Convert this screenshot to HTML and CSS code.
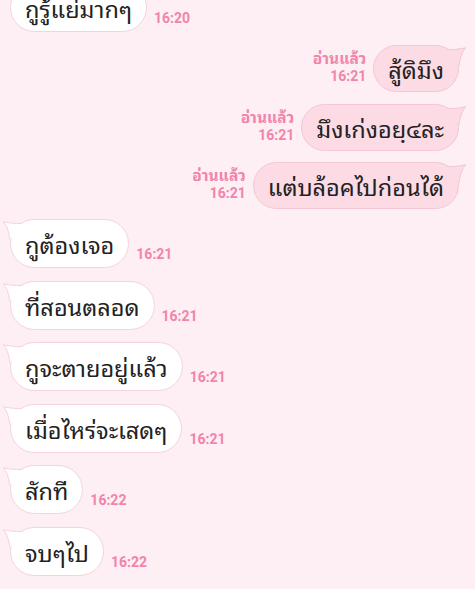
FILE: index.html
```html
<!DOCTYPE html>
<html lang="th">
<head>
<meta charset="utf-8">
<link rel="stylesheet" href="styles.css">
</head>
<body>
<div class="chat">
  <div class="row left first">
    <div class="bubble in">กูรู้แย่มากๆ</div>
    <div class="time">16:20</div>
  </div>

  <div class="row right r1">
    <div class="meta"><span class="read">อ่านแล้ว</span><span class="time">16:21</span></div>
    <div class="bubble out">สู้ดิมึง<svg class="tail-r" viewBox="0 0 20 22" width="20" height="22"><path d="M0 2.5 C6 3 12 2 18.5 0.8 C16 4 13.5 8 12 19" class="tf"/><path d="M0 2.5 C6 3 12 2 18.5 0.8 C16 4 13.5 8 12 19" class="ts"/></svg></div>
  </div>

  <div class="row right r2">
    <div class="meta"><span class="read">อ่านแล้ว</span><span class="time">16:21</span></div>
    <div class="bubble out">มึงเก่งอยฺ๔ละ<svg class="tail-r" viewBox="0 0 20 22" width="20" height="22"><path d="M0 2.5 C6 3 12 2 18.5 0.8 C16 4 13.5 8 12 19" class="tf"/><path d="M0 2.5 C6 3 12 2 18.5 0.8 C16 4 13.5 8 12 19" class="ts"/></svg></div>
  </div>

  <div class="row right r3">
    <div class="meta"><span class="read">อ่านแล้ว</span><span class="time">16:21</span></div>
    <div class="bubble out">แต่บล้อคไปก่อนได้<svg class="tail-r" viewBox="0 0 20 22" width="20" height="22"><path d="M0 2.5 C6 3 12 2 18.5 0.8 C16 4 13.5 8 12 19" class="tf"/><path d="M0 2.5 C6 3 12 2 18.5 0.8 C16 4 13.5 8 12 19" class="ts"/></svg></div>
  </div>

  <div class="row left l1">
    <div class="bubble in">กูต้องเจอ<svg class="tail-l" viewBox="0 0 20 22" width="20" height="22"><path d="M20 2.5 C14 3 8 2 1.5 0.8 C4 4 6.5 8 8 19" class="tf"/><path d="M20 2.5 C14 3 8 2 1.5 0.8 C4 4 6.5 8 8 19" class="ts"/></svg></div>
    <div class="time">16:21</div>
  </div>

  <div class="row left">
    <div class="bubble in">ที่สอนตลอด<svg class="tail-l" viewBox="0 0 20 22" width="20" height="22"><path d="M20 2.5 C14 3 8 2 1.5 0.8 C4 4 6.5 8 8 19" class="tf"/><path d="M20 2.5 C14 3 8 2 1.5 0.8 C4 4 6.5 8 8 19" class="ts"/></svg></div>
    <div class="time">16:21</div>
  </div>

  <div class="row left">
    <div class="bubble in">กูจะตายอยู่แล้ว<svg class="tail-l" viewBox="0 0 20 22" width="20" height="22"><path d="M20 2.5 C14 3 8 2 1.5 0.8 C4 4 6.5 8 8 19" class="tf"/><path d="M20 2.5 C14 3 8 2 1.5 0.8 C4 4 6.5 8 8 19" class="ts"/></svg></div>
    <div class="time">16:21</div>
  </div>

  <div class="row left">
    <div class="bubble in">เมื่อไหร่จะเสดๆ<svg class="tail-l" viewBox="0 0 20 22" width="20" height="22"><path d="M20 2.5 C14 3 8 2 1.5 0.8 C4 4 6.5 8 8 19" class="tf"/><path d="M20 2.5 C14 3 8 2 1.5 0.8 C4 4 6.5 8 8 19" class="ts"/></svg></div>
    <div class="time">16:21</div>
  </div>

  <div class="row left">
    <div class="bubble in">สักที<svg class="tail-l" viewBox="0 0 20 22" width="20" height="22"><path d="M20 2.5 C14 3 8 2 1.5 0.8 C4 4 6.5 8 8 19" class="tf"/><path d="M20 2.5 C14 3 8 2 1.5 0.8 C4 4 6.5 8 8 19" class="ts"/></svg></div>
    <div class="time">16:22</div>
  </div>

  <div class="row left">
    <div class="bubble in">จบๆไป<svg class="tail-l" viewBox="0 0 20 22" width="20" height="22"><path d="M20 2.5 C14 3 8 2 1.5 0.8 C4 4 6.5 8 8 19" class="tf"/><path d="M20 2.5 C14 3 8 2 1.5 0.8 C4 4 6.5 8 8 19" class="ts"/></svg></div>
    <div class="time">16:22</div>
  </div>
</div>
</body>
</html>
```
FILE: styles.css
```css
html, body {
  margin: 0;
  padding: 0;
  background: #fdeff4;
  height: 100%;
  overflow: hidden;
}
.chat {
  display: flex;
  flex-direction: column;
  font-family: "Noto Sans Thai Looped", "Noto Sans", "Noto Sans Thai", sans-serif;
}
.row {
  display: flex;
  align-items: flex-end;
}
.row.left {
  padding-left: 10px;
  margin-top: 12.6px;
  gap: 7px;
}
.row.left.first {
  margin-top: -17px;
}
.row.left.l1 {
  margin-top: 10px;
}
.row.right {
  justify-content: flex-end;
  padding-right: 16px;
  gap: 7px;
}
.row.right.r1 { margin-top: 13px; }
.row.right.r2 { margin-top: 12px; }
.row.right.r3 { margin-top: 11px; }
.bubble {
  position: relative;
  box-sizing: border-box;
  height: 49px;
  padding: 0 14px;
  border-radius: 25px;
  font-size: 23.5px;
  line-height: 47px;
  color: #222222;
  white-space: nowrap;
}
.bubble.in {
  background: #ffffff;
  border: 1px solid #f4d3de;
}
.bubble.out {
  height: 47px;
  line-height: 45px;
  background: #fcdbe5;
  border: 1px solid #f3c7d5;
}
.time {
  font-family: Roboto, "Liberation Sans", sans-serif;
  font-weight: 700;
  font-size: 14px;
  line-height: 16px;
  color: #f283ab;
}
.row.left .time {
  margin-bottom: 6px;
}
.meta {
  display: flex;
  flex-direction: column;
  align-items: flex-end;
  margin-bottom: 7px;
}
.meta .time {
  line-height: 18px;
}
.read {
  font-family: "Noto Sans Thai Looped", "Noto Sans", "Noto Sans Thai", sans-serif;
  font-weight: 700;
  font-size: 15.5px;
  line-height: 20px;
  color: #f283ab;
}
.tail-l, .tail-r {
  position: absolute;
  top: 1px;
  overflow: visible;
}
.tail-l { left: -9px; }
.tail-r { right: -9px; }
.in .tf { fill: #ffffff; }
.out .tf { fill: #fcdbe5; }
.tf { stroke: none; }
.ts { fill: none; stroke-width: 1; }
.in .ts { stroke: #f4d3de; }
.out .ts { stroke: #f3c7d5; }
```
